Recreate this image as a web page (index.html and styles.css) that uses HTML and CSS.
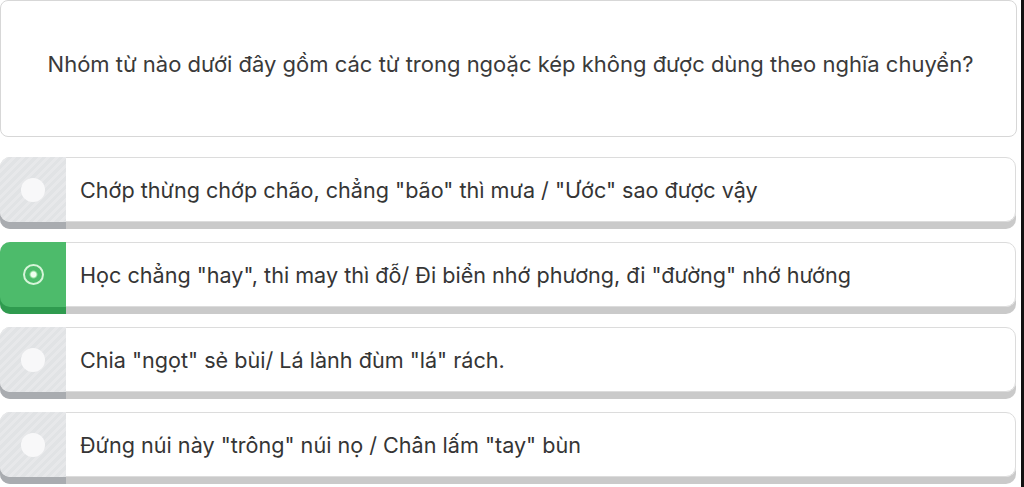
FILE: index.html
```html
<!DOCTYPE html>
<html lang="vi">
<head>
<meta charset="utf-8">
<link rel="stylesheet" href="styles.css">
</head>
<body>
<div class="page">
  <main class="quiz">
    <section class="question">
      <p class="question-text">Nhóm từ nào dưới đây gồm các từ trong ngoặc kép không được dùng theo nghĩa chuyển?</p>
    </section>
    <ul class="options">
      <li class="option">
        <span class="knob"><span class="dot"></span></span>
        <span class="label">Chớp thừng chớp chão, chẳng "bão" thì mưa / "Ước" sao được vậy</span>
      </li>
      <li class="option selected">
        <span class="knob"><span class="dot"></span></span>
        <span class="label">Học chẳng "hay", thi may thì đỗ/ Đi biển nhớ phương, đi "đường" nhớ hướng</span>
      </li>
      <li class="option">
        <span class="knob"><span class="dot"></span></span>
        <span class="label">Chia "ngọt" sẻ bùi/ Lá lành đùm "lá" rách.</span>
      </li>
      <li class="option">
        <span class="knob"><span class="dot"></span></span>
        <span class="label">Đứng núi này "trông" núi nọ / Chân lấm "tay" bùn</span>
      </li>
    </ul>
  </main>
  <div class="edge"></div>
</div>
</body>
</html>
```

FILE: styles.css
```css
* { box-sizing: border-box; }
html, body { margin: 0; padding: 0; background: #ffffff; }
body {
  width: 1024px;
  height: 487px;
  overflow: hidden;
  font-family: Inter, "Noto Sans", sans-serif;
  color: #383838;
}
.page {
  display: flex;
  height: 487px;
}
.quiz {
  width: 1017px;
  flex: none;
}
.edge {
  margin-left: 4px;
  width: 3px;
  background: #111111;
}
.question {
  height: 137px;
  border: 1px solid #d7d7d7;
  border-radius: 8px;
  display: flex;
  align-items: center;
  justify-content: center;
}
.question-text {
  margin: 0;
  font-size: 22px;
  padding-bottom: 10px;
  padding-left: 4px;
  color: #3a3a3a;
}
.options {
  list-style: none;
  margin: 20px 0 0 0;
  padding: 0;
  display: flex;
  flex-direction: column;
  gap: 20px;
}
.option {
  display: flex;
  align-items: center;
  height: 65px;
  border: 1px solid #dcdcdc;
  border-radius: 10px;
  box-shadow: 0 7px 0 #cacaca;
  margin-right: 1px;
}
.knob {
  align-self: stretch;
  width: 66px;
  margin: -1px 0 -1px -1px;
  border-radius: 10px 0 0 10px;
  background: repeating-linear-gradient(135deg, #e1e3e5 0 3px, #e7e8ea 3px 6px);
  box-shadow: 0 7px 0 #a9acb0;
  display: flex;
  align-items: center;
  justify-content: center;
  flex: none;
}
.dot {
  width: 24px;
  height: 24px;
  border-radius: 50%;
  background: #f8f8f9;
}
.label {
  padding-left: 14px;
  font-size: 21.6px;
  color: #353535;
}
.selected .knob {
  background: #4dbb6b;
  box-shadow: 0 7px 0 #2f9b4f;
}
.selected .dot {
  width: 21px;
  height: 21px;
  background: radial-gradient(circle, #f0fff0 0 2.5px, #8fdc9a 3.5px, #4dbb6b 4.5px);
  border: 2.5px solid #d6f5d9;
}
```
